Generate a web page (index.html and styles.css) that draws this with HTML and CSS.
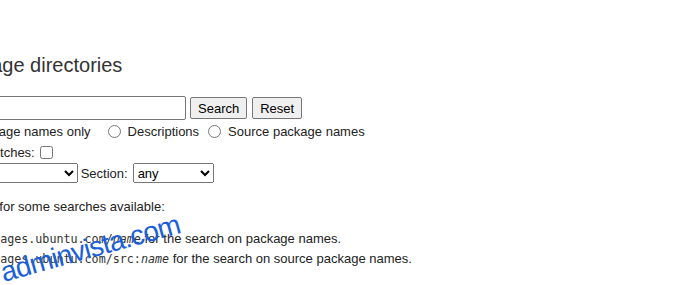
FILE: index.html
```html
<!DOCTYPE html>
<html lang="en">
<head>
    <meta charset="UTF-8">
    <meta name="viewport" content="width=device-width, initial-scale=1.0">
    <title>Ubuntu – Package Search</title>
    <link rel="stylesheet" href="styles.css">
</head>
<body>
    <!-- Main Content -->
    <div class="page">
        <h2>Search package directories</h2>

        <form class="search-form" method="GET" action="/search">
            <div class="row row-keyword">
                <label for="keyword">Keyword:</label>
                <input type="text" name="keywords" id="keyword" class="keyword-input">
                <input type="submit" value="Search" class="btn btn-search">
                <input type="reset" value="Reset" class="btn btn-reset">
            </div>

            <div class="row row-searchon">
                <span>Search on:</span>
                <input type="radio" name="searchon" value="names" id="onlynames" class="radio radio-first">
                <label for="onlynames">Package names only</label>
                <input type="radio" name="searchon" value="all" id="descs" class="radio radio-wide">
                <label for="descs">Descriptions</label>
                <input type="radio" name="searchon" value="sourcenames" id="src" class="radio">
                <label for="src">Source package names</label>
            </div>

            <div class="row row-exact">
                <label for="exact">Only show exact matches:</label>
                <input type="checkbox" name="exact" id="exact" value="1" class="check">
            </div>

            <div class="row row-selects">
                <label for="suite">Distribution:</label>
                <select name="suite" id="suite" class="select select-suite">
                    <option value="noble">noble</option>
                    <option value="jammy">jammy</option>
                    <option value="focal">focal</option>
                    <option value="all">any</option>
                </select>
                <label for="section" class="section-label">Section:</label>
                <select name="section" id="section" class="select select-section">
                    <option value="all" selected>any</option>
                    <option value="main">main</option>
                    <option value="restricted">restricted</option>
                    <option value="universe">universe</option>
                    <option value="multiverse">multiverse</option>
                </select>
            </div>
        </form>

        <p class="shortcuts">There are shortcuts for some searches available:</p>
        <ul class="shortcut-list">
            <li><code>packages.ubuntu.com/<var>name</var></code> for the search on package names.</li>
            <li><code>packages.ubuntu.com/src:<var>name</var></code> for the search on source package names.</li>
        </ul>
    </div>

    <!-- Watermark -->
    <div class="watermark">adminvista.com</div>
</body>
</html>
```

FILE: styles.css
```css
/* Basic reset */
* {
    box-sizing: border-box;
}

body {
    margin: 0;
    height: 285px;
    overflow: hidden;
    position: relative;
    background-color: #fff;
    color: #222;
    font-family: "Liberation Sans", Arial, sans-serif;
    font-size: 13px;
}

/* Page is scrolled a bit to the right, so the left edge is cut */
.page {
    margin-left: -117px;
    padding-top: 54px;
}

.page h2 {
    margin: 0 0 20px -3px;
    font-size: 20px;
    font-weight: normal;
    line-height: 22px;
    color: #333;
}

/* Search form */
.search-form .row {
    display: flex;
    align-items: center;
    white-space: nowrap;
}

.row-keyword {
    height: 24px;
}

.row-searchon {
    height: 22px;
}

.row-exact {
    height: 21px;
}

.row-selects {
    height: 20px;
}

.keyword-input {
    width: 245px;
    height: 24px;
    margin: 0 0 0 4px;
    padding: 1px 3px;
    border: 1px solid #767676;
    border-radius: 2px;
    font: inherit;
}

.btn {
    height: 22px;
    margin: 0 0 0 4px;
    padding: 0;
    border: 1px solid #767676;
    border-radius: 2px;
    background-color: #efefef;
    color: #000;
    font: inherit;
}

.btn-search {
    width: 57px;
}

.btn-reset {
    margin-left: 5px;
    width: 50px;
}

.radio {
    width: 13px;
    height: 13px;
    margin: 0 7px 0 9px;
}

.radio-first {
    margin-left: 4px;
}

.radio-wide {
    margin-left: 17px;
}

.check {
    width: 13px;
    height: 13px;
    margin: 0 0 0 5px;
}

.select {
    height: 20px;
    margin: 0;
    font: inherit;
    color: #000;
}

.select-suite {
    width: 122px;
    margin-left: 4px;
}

.section-label {
    margin-left: 3px;
}

.select-section {
    width: 81px;
    margin-left: 5px;
}

/* Shortcuts */
.shortcuts {
    margin: 16px 0 0;
    line-height: 15px;
}

.shortcut-list {
    margin: 15px 0 0;
    padding-left: 89px;
    line-height: 20px;
}

.shortcut-list code {
    font-family: "DejaVu Sans Mono", monospace;
    font-size: 11.7px;
    color: #333;
}

.shortcut-list var {
    font-style: italic;
}

/* Watermark over the content */
.watermark {
    position: absolute;
    left: 4px;
    top: 259.3px;
    font-family: "Liberation Sans", Arial, sans-serif;
    font-size: 28px;
    line-height: 28px;
    letter-spacing: -0.7px;
    color: #1a5fd8;
    transform: rotate(-15.5deg);
    transform-origin: 0 23.7px;
    white-space: nowrap;
}
```
